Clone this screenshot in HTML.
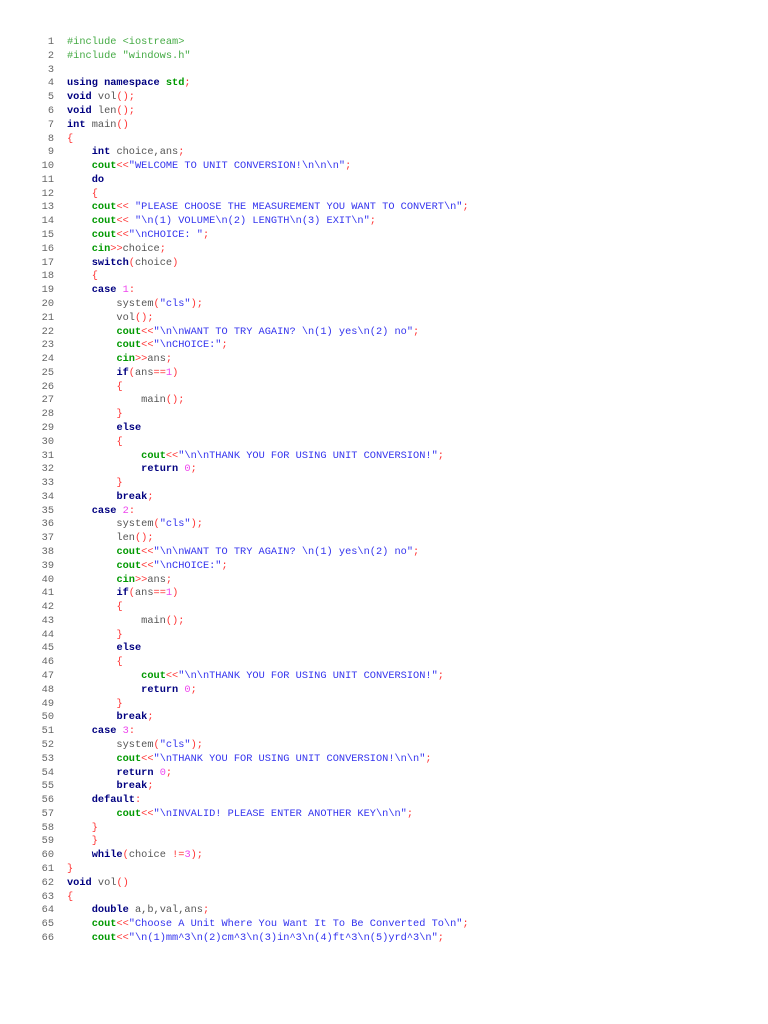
<!DOCTYPE html><html><head><meta charset="utf-8"><style>
body{margin:0;background:#fff;width:768px;height:1024px;overflow:hidden}
#c{position:absolute;left:0;top:36.1px;font-family:"Liberation Mono",monospace;font-size:10.3px;color:#555}
.l{height:13.785px;line-height:13.785px;white-space:pre;position:relative}
.l i{font-style:normal;position:absolute;left:0;width:54px;text-align:right;color:#666}
.l span.t{position:absolute;left:67px}
.k{color:#000080;font-weight:bold}.g{color:#009900;font-weight:bold}.p{color:#ff3333}.s{color:#3333ee}.n{color:#ee44ee}.c{color:#44aa44}
</style></head><body><div id="c">
<div class="l"><i>1</i><span class="t"><b class="c" style="font-weight:normal">#include &lt;iostream&gt;</b></span></div>
<div class="l"><i>2</i><span class="t"><b class="c" style="font-weight:normal">#include "windows.h"</b></span></div>
<div class="l"><i>3</i><span class="t"></span></div>
<div class="l"><i>4</i><span class="t"><b class="k">using namespace</b> <b class="g">std</b><b class="p" style="font-weight:normal">;</b></span></div>
<div class="l"><i>5</i><span class="t"><b class="k">void</b> vol<span class="p">();</span></span></div>
<div class="l"><i>6</i><span class="t"><b class="k">void</b> len<span class="p">();</span></span></div>
<div class="l"><i>7</i><span class="t"><b class="k">int</b> main<span class="p">()</span></span></div>
<div class="l"><i>8</i><span class="t"><span class="p">{</span></span></div>
<div class="l"><i>9</i><span class="t">    <b class="k">int</b> choice,ans<span class="p">;</span></span></div>
<div class="l"><i>10</i><span class="t">    <b class="g">cout</b><span class="p">&lt;&lt;</span><span class="s">"WELCOME TO UNIT CONVERSION!\n\n\n"</span><span class="p">;</span></span></div>
<div class="l"><i>11</i><span class="t">    <b class="k">do</b></span></div>
<div class="l"><i>12</i><span class="t">    <span class="p">{</span></span></div>
<div class="l"><i>13</i><span class="t">    <b class="g">cout</b><span class="p">&lt;&lt;</span> <span class="s">"PLEASE CHOOSE THE MEASUREMENT YOU WANT TO CONVERT\n"</span><span class="p">;</span></span></div>
<div class="l"><i>14</i><span class="t">    <b class="g">cout</b><span class="p">&lt;&lt;</span> <span class="s">"\n(1) VOLUME\n(2) LENGTH\n(3) EXIT\n"</span><span class="p">;</span></span></div>
<div class="l"><i>15</i><span class="t">    <b class="g">cout</b><span class="p">&lt;&lt;</span><span class="s">"\nCHOICE: "</span><span class="p">;</span></span></div>
<div class="l"><i>16</i><span class="t">    <b class="g">cin</b><span class="p">&gt;&gt;</span>choice<span class="p">;</span></span></div>
<div class="l"><i>17</i><span class="t">    <b class="k">switch</b><span class="p">(</span>choice<span class="p">)</span></span></div>
<div class="l"><i>18</i><span class="t">    <span class="p">{</span></span></div>
<div class="l"><i>19</i><span class="t">    <b class="k">case</b> <span class="n">1</span><span class="p">:</span></span></div>
<div class="l"><i>20</i><span class="t">        system<span class="p">(</span><span class="s">"cls"</span><span class="p">);</span></span></div>
<div class="l"><i>21</i><span class="t">        vol<span class="p">();</span></span></div>
<div class="l"><i>22</i><span class="t">        <b class="g">cout</b><span class="p">&lt;&lt;</span><span class="s">"\n\nWANT TO TRY AGAIN? \n(1) yes\n(2) no"</span><span class="p">;</span></span></div>
<div class="l"><i>23</i><span class="t">        <b class="g">cout</b><span class="p">&lt;&lt;</span><span class="s">"\nCHOICE:"</span><span class="p">;</span></span></div>
<div class="l"><i>24</i><span class="t">        <b class="g">cin</b><span class="p">&gt;&gt;</span>ans<span class="p">;</span></span></div>
<div class="l"><i>25</i><span class="t">        <b class="k">if</b><span class="p">(</span>ans<span class="p">==</span><span class="n">1</span><span class="p">)</span></span></div>
<div class="l"><i>26</i><span class="t">        <span class="p">{</span></span></div>
<div class="l"><i>27</i><span class="t">            main<span class="p">();</span></span></div>
<div class="l"><i>28</i><span class="t">        <span class="p">}</span></span></div>
<div class="l"><i>29</i><span class="t">        <b class="k">else</b></span></div>
<div class="l"><i>30</i><span class="t">        <span class="p">{</span></span></div>
<div class="l"><i>31</i><span class="t">            <b class="g">cout</b><span class="p">&lt;&lt;</span><span class="s">"\n\nTHANK YOU FOR USING UNIT CONVERSION!"</span><span class="p">;</span></span></div>
<div class="l"><i>32</i><span class="t">            <b class="k">return</b> <span class="n">0</span><span class="p">;</span></span></div>
<div class="l"><i>33</i><span class="t">        <span class="p">}</span></span></div>
<div class="l"><i>34</i><span class="t">        <b class="k">break</b><span class="p">;</span></span></div>
<div class="l"><i>35</i><span class="t">    <b class="k">case</b> <span class="n">2</span><span class="p">:</span></span></div>
<div class="l"><i>36</i><span class="t">        system<span class="p">(</span><span class="s">"cls"</span><span class="p">);</span></span></div>
<div class="l"><i>37</i><span class="t">        len<span class="p">();</span></span></div>
<div class="l"><i>38</i><span class="t">        <b class="g">cout</b><span class="p">&lt;&lt;</span><span class="s">"\n\nWANT TO TRY AGAIN? \n(1) yes\n(2) no"</span><span class="p">;</span></span></div>
<div class="l"><i>39</i><span class="t">        <b class="g">cout</b><span class="p">&lt;&lt;</span><span class="s">"\nCHOICE:"</span><span class="p">;</span></span></div>
<div class="l"><i>40</i><span class="t">        <b class="g">cin</b><span class="p">&gt;&gt;</span>ans<span class="p">;</span></span></div>
<div class="l"><i>41</i><span class="t">        <b class="k">if</b><span class="p">(</span>ans<span class="p">==</span><span class="n">1</span><span class="p">)</span></span></div>
<div class="l"><i>42</i><span class="t">        <span class="p">{</span></span></div>
<div class="l"><i>43</i><span class="t">            main<span class="p">();</span></span></div>
<div class="l"><i>44</i><span class="t">        <span class="p">}</span></span></div>
<div class="l"><i>45</i><span class="t">        <b class="k">else</b></span></div>
<div class="l"><i>46</i><span class="t">        <span class="p">{</span></span></div>
<div class="l"><i>47</i><span class="t">            <b class="g">cout</b><span class="p">&lt;&lt;</span><span class="s">"\n\nTHANK YOU FOR USING UNIT CONVERSION!"</span><span class="p">;</span></span></div>
<div class="l"><i>48</i><span class="t">            <b class="k">return</b> <span class="n">0</span><span class="p">;</span></span></div>
<div class="l"><i>49</i><span class="t">        <span class="p">}</span></span></div>
<div class="l"><i>50</i><span class="t">        <b class="k">break</b><span class="p">;</span></span></div>
<div class="l"><i>51</i><span class="t">    <b class="k">case</b> <span class="n">3</span><span class="p">:</span></span></div>
<div class="l"><i>52</i><span class="t">        system<span class="p">(</span><span class="s">"cls"</span><span class="p">);</span></span></div>
<div class="l"><i>53</i><span class="t">        <b class="g">cout</b><span class="p">&lt;&lt;</span><span class="s">"\nTHANK YOU FOR USING UNIT CONVERSION!\n\n"</span><span class="p">;</span></span></div>
<div class="l"><i>54</i><span class="t">        <b class="k">return</b> <span class="n">0</span><span class="p">;</span></span></div>
<div class="l"><i>55</i><span class="t">        <b class="k">break</b><span class="p">;</span></span></div>
<div class="l"><i>56</i><span class="t">    <b class="k">default</b><span class="p">:</span></span></div>
<div class="l"><i>57</i><span class="t">        <b class="g">cout</b><span class="p">&lt;&lt;</span><span class="s">"\nINVALID! PLEASE ENTER ANOTHER KEY\n\n"</span><span class="p">;</span></span></div>
<div class="l"><i>58</i><span class="t">    <span class="p">}</span></span></div>
<div class="l"><i>59</i><span class="t">    <span class="p">}</span></span></div>
<div class="l"><i>60</i><span class="t">    <b class="k">while</b><span class="p">(</span>choice <span class="p">!=</span><span class="n">3</span><span class="p">);</span></span></div>
<div class="l"><i>61</i><span class="t"><span class="p">}</span></span></div>
<div class="l"><i>62</i><span class="t"><b class="k">void</b> vol<span class="p">()</span></span></div>
<div class="l"><i>63</i><span class="t"><span class="p">{</span></span></div>
<div class="l"><i>64</i><span class="t">    <b class="k">double</b> a,b,val,ans<span class="p">;</span></span></div>
<div class="l"><i>65</i><span class="t">    <b class="g">cout</b><span class="p">&lt;&lt;</span><span class="s">"Choose A Unit Where You Want It To Be Converted To\n"</span><span class="p">;</span></span></div>
<div class="l"><i>66</i><span class="t">    <b class="g">cout</b><span class="p">&lt;&lt;</span><span class="s">"\n(1)mm^3\n(2)cm^3\n(3)in^3\n(4)ft^3\n(5)yrd^3\n"</span><span class="p">;</span></span></div>
</div></body></html>
